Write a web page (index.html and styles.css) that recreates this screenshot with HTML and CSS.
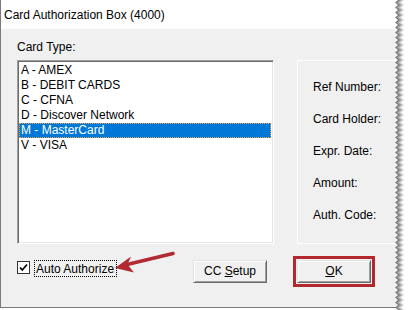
FILE: index.html
```html
<!DOCTYPE html>
<html>
<head>
<meta charset="utf-8">
<link rel="stylesheet" href="styles.css">
</head>
<body>
<div class="dialog">
  <div class="titlebar">Card Authorization Box (4000)</div>
  <div class="content">
    <div class="label">Card Type:</div>
    <div class="main">
      <div class="listbox">
        <div class="item">A - AMEX</div>
        <div class="item">B - DEBIT CARDS</div>
        <div class="item">C - CFNA</div>
        <div class="item">D - Discover Network</div>
        <div class="item selected">M - MasterCard</div>
        <div class="item">V - VISA</div>
      </div>
      <div class="panel">
        <div class="field">Ref Number:</div>
        <div class="field">Card Holder:</div>
        <div class="field">Expr. Date:</div>
        <div class="field">Amount:</div>
        <div class="field">Auth. Code:</div>
      </div>
    </div>
    <div class="footer">
      <div class="check">
        <span class="box"><svg width="11" height="11" viewBox="0 0 11 11"><path d="M2 5.5 L4.3 8 L9 2.5" fill="none" stroke="#000" stroke-width="1.8"/></svg></span>
        <span class="check-label">Auto Authorize</span>
      </div>
      <div class="btn cc">CC <u>S</u>etup</div>
      <div class="highlight"><div class="btn ok"><u>O</u>K</div></div>
    </div>
  </div>
  <svg class="arrow" width="408" height="310" viewBox="0 0 408 310">
    <line x1="173" y1="253.5" x2="127" y2="264.5" stroke="#b22a33" stroke-width="3.5" stroke-linecap="round"/>
    <polygon points="115,268 131,256.5 127.5,264.5 134,272.5" fill="#b22a33"/>
  </svg>
  <svg class="torn" width="13" height="310" viewBox="0 0 13 310">
    <defs>
      <pattern id="teeth" x="0" y="0" width="13" height="5" patternUnits="userSpaceOnUse">
        <polygon points="3,0 0,2.5 3,5 13,5 13,0" fill="#7d7d7d"/>
        <polygon points="5,0 2,2.5 5,5 13,5 13,0" fill="#a8a8a8"/>
        <polygon points="7,0 4,2.5 7,5 13,5 13,0" fill="#d6d6d6"/>
        <polygon points="9,0 6,2.5 9,5 13,5 13,0" fill="#ffffff"/>
      </pattern>
    </defs>
    <rect x="0" y="0" width="13" height="310" fill="url(#teeth)"/>
  </svg>
</div>
</body>
</html>
```
FILE: styles.css
```css
html, body {
  margin: 0;
  padding: 0;
  background: #ffffff;
}
body {
  width: 408px;
  height: 310px;
  overflow: hidden;
  font-family: "Liberation Sans", Arial, sans-serif;
  font-size: 12px;
  color: #000;
}
.dialog {
  position: relative;
  box-sizing: border-box;
  width: 408px;
  height: 308px;
  background: #f0f0f0;
  border-left: 1px solid #7a7a7a;
  border-bottom: 1px solid #7a7a7a;
}
.titlebar {
  height: 29px;
  line-height: 30px;
  background: #ffffff;
  padding-left: 3px;
  font-size: 12px;
}
.content {
  padding-left: 16px;
}
.label {
  margin-top: 11px;
  height: 14px;
  line-height: 14px;
  margin-bottom: 6px;
}
.main {
  display: flex;
  align-items: flex-start;
}
.listbox {
  box-sizing: border-box;
  width: 257px;
  height: 184px;
  background: #ffffff;
  border-style: solid;
  border-width: 1px;
  border-color: #a0a0a0 #ffffff #ffffff #a0a0a0;
  box-shadow: inset 1px 1px 0 #696969, inset -1px -1px 0 #e3e3e3;
  padding: 2px 2px 0 1px;
}
.item {
  height: 15px;
  line-height: 15px;
  padding-left: 2px;
  white-space: nowrap;
}
.item.selected {
  background: #0078d7;
  color: #ffffff;
  outline: 1px dotted #f0a050;
  outline-offset: -1px;
}
.panel {
  box-sizing: border-box;
  margin-left: 23px;
  width: 110px;
  height: 184px;
  border-top: 1px solid #ffffff;
  border-left: 1px solid #ffffff;
  border-bottom: 1px solid #ffffff;
  padding: 19px 0 0 15px;
  display: flex;
  flex-direction: column;
  gap: 18px;
}
.field {
  height: 14px;
  line-height: 14px;
  white-space: nowrap;
}
.footer {
  margin-top: 12px;
  display: grid;
  grid-template-columns: 176px 100px 82px;
  align-items: start;
}
.check {
  margin-top: 4px;
  display: flex;
  align-items: flex-start;
}
.box {
  box-sizing: border-box;
  width: 13px;
  height: 13px;
  margin-top: 1px;
  margin-right: 4px;
  background: #ffffff;
  border: 1px solid #333333;
  display: flex;
  align-items: center;
  justify-content: center;
}
.box svg {
  display: block;
}
.check-label {
  height: 15px;
  line-height: 16px;
  padding: 0 2px 0 1px;
  border: 1px dotted #000;
  white-space: nowrap;
}
.btn {
  box-sizing: border-box;
  width: 74px;
  height: 23px;
  line-height: 20px;
  text-align: center;
  background: #f0f0f0;
  border-style: solid;
  border-width: 1px;
  border-color: #e3e3e3 #696969 #696969 #e3e3e3;
  box-shadow: inset 1px 1px 0 #ffffff, inset -1px -1px 0 #a0a0a0;
  white-space: nowrap;
}
.btn.cc {
  margin-top: 4px;
}
.highlight {
  box-sizing: border-box;
  width: 82px;
  height: 31px;
  border: 3px solid #b3282f;
  padding: 1px;
}
.arrow {
  position: absolute;
  left: -1px;
  top: 0;
  pointer-events: none;
}
.torn {
  position: absolute;
  right: 0;
  top: 0;
  pointer-events: none;
}
```
